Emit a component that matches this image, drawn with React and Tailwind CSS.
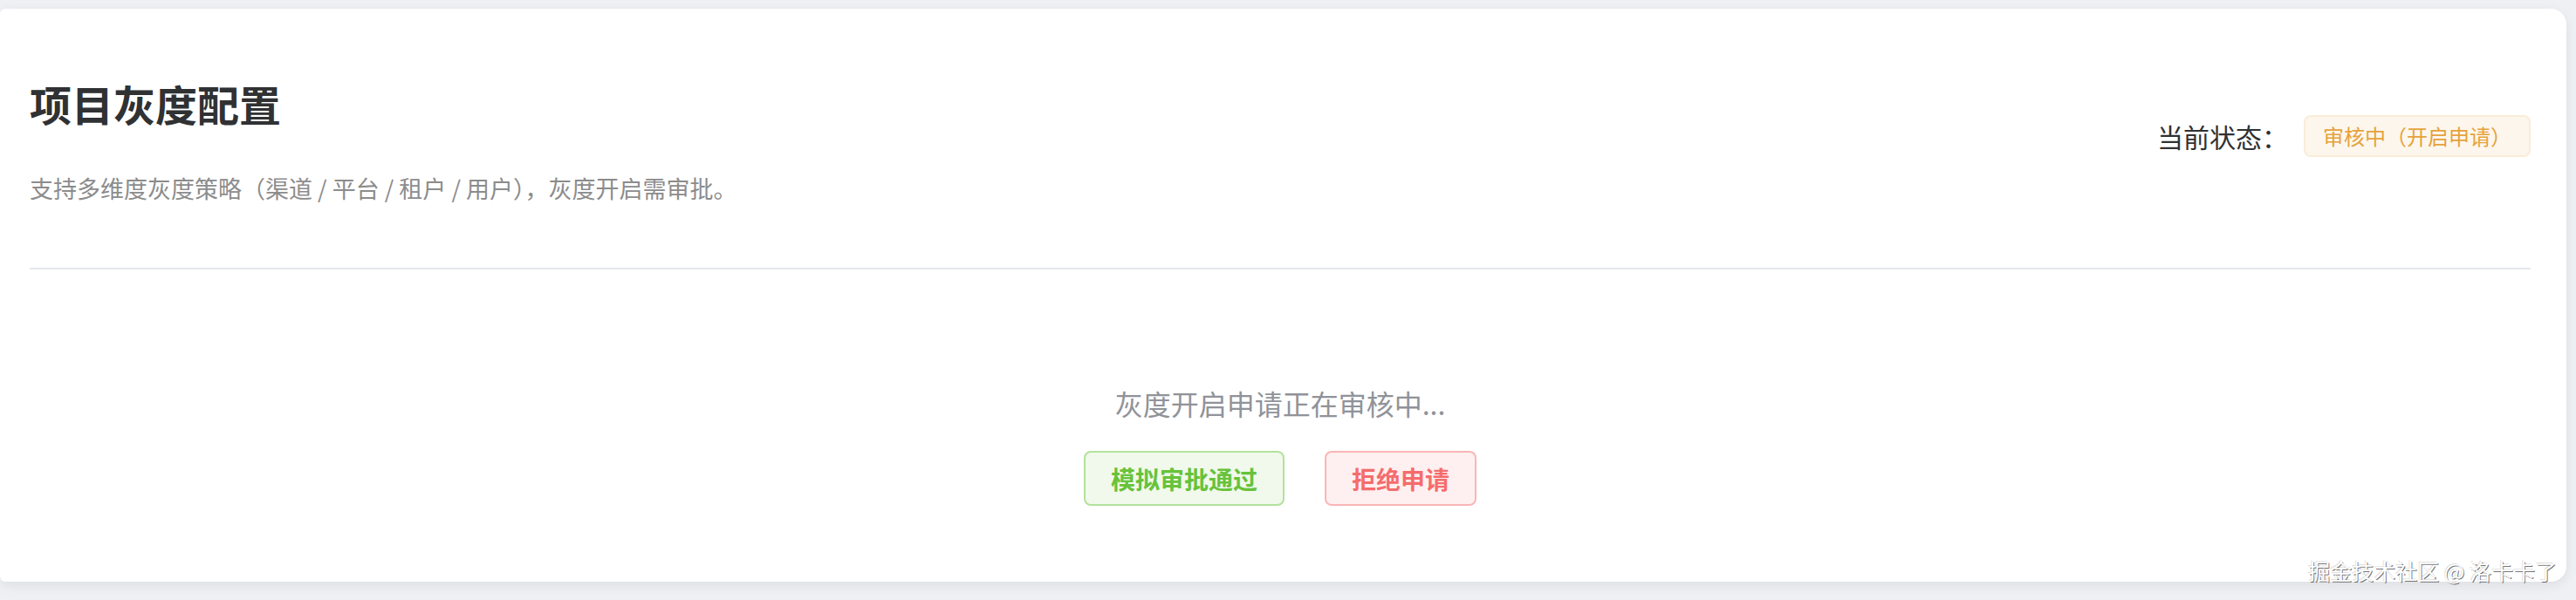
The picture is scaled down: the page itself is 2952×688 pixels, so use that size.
import React from 'react';

const font = { fontFamily: '"Noto Sans CJK SC", "Noto Sans", sans-serif' };

const App = () => {
  const handleApprove = () => console.log('approved');
  const handleReject = () => console.log('rejected');

  return (
    <div
      className="relative h-[688px] w-full overflow-hidden bg-[#eef0f4] pt-[10px] pr-[11px]"
      style={font}
    >
      {/* Card */}
      <div className="h-[657px] rounded-l-[6px] rounded-r-[18px] bg-white pl-[34px] pr-[41px] pt-[80px] shadow-[0_4px_14px_rgba(0,0,0,0.08)]">
        {/* Header */}
        <div className="flex items-start justify-between">
          <div>
            <h1 className="text-[48px] font-bold leading-[56px] text-[#303133]">
              项目灰度配置
            </h1>
            <p className="mt-[52px] text-[27px] leading-[36px] text-[#8c8c8c]">
              支持多维度灰度策略（渠道 / 平台 / 租户 / 用户），灰度开启需审批。
            </p>
          </div>
          <div className="mt-[42px] flex items-center">
            <span className="text-[30px] leading-[40px] text-[#303133]">当前状态：</span>
            <span className="ml-[18px] flex h-[48px] items-center rounded-[8px] border-2 border-[#faecd8] bg-[#fdf6ec] px-[20px] text-[24px] text-[#e6a23c]">
              审核中（开启申请）
            </span>
          </div>
        </div>

        <div className="mt-[73px] h-[2px] bg-[#e4e7ed]" />

        {/* Pending state */}
        <div className="mt-[131px] flex flex-col items-center">
          <p className="text-[32px] leading-[44px] text-[#909399]">灰度开启申请正在审核中...</p>
          <div className="mt-[33px] flex gap-[46px]">
            <button
              onClick={handleApprove}
              className="h-[63px] w-[230px] rounded-[8px] border-2 border-[#b3e19d] bg-[#f0f9eb] text-[28px] font-bold text-[#67c23a]"
            >
              模拟审批通过
            </button>
            <button
              onClick={handleReject}
              className="h-[63px] w-[174px] rounded-[8px] border-2 border-[#fab6b6] bg-[#fef0f0] text-[28px] font-bold text-[#f56c6c]"
            >
              拒绝申请
            </button>
          </div>
        </div>
      </div>

      {/* Watermark */}
      <div className="absolute bottom-[20px] right-[22px] text-[25px] leading-[28px] text-white [text-shadow:1px_1px_0_rgba(0,0,0,0.55),-1px_-1px_0_rgba(0,0,0,0.15)]">
        掘金技术社区 @ 洛卡卡了
      </div>
    </div>
  );
};

export default App;
